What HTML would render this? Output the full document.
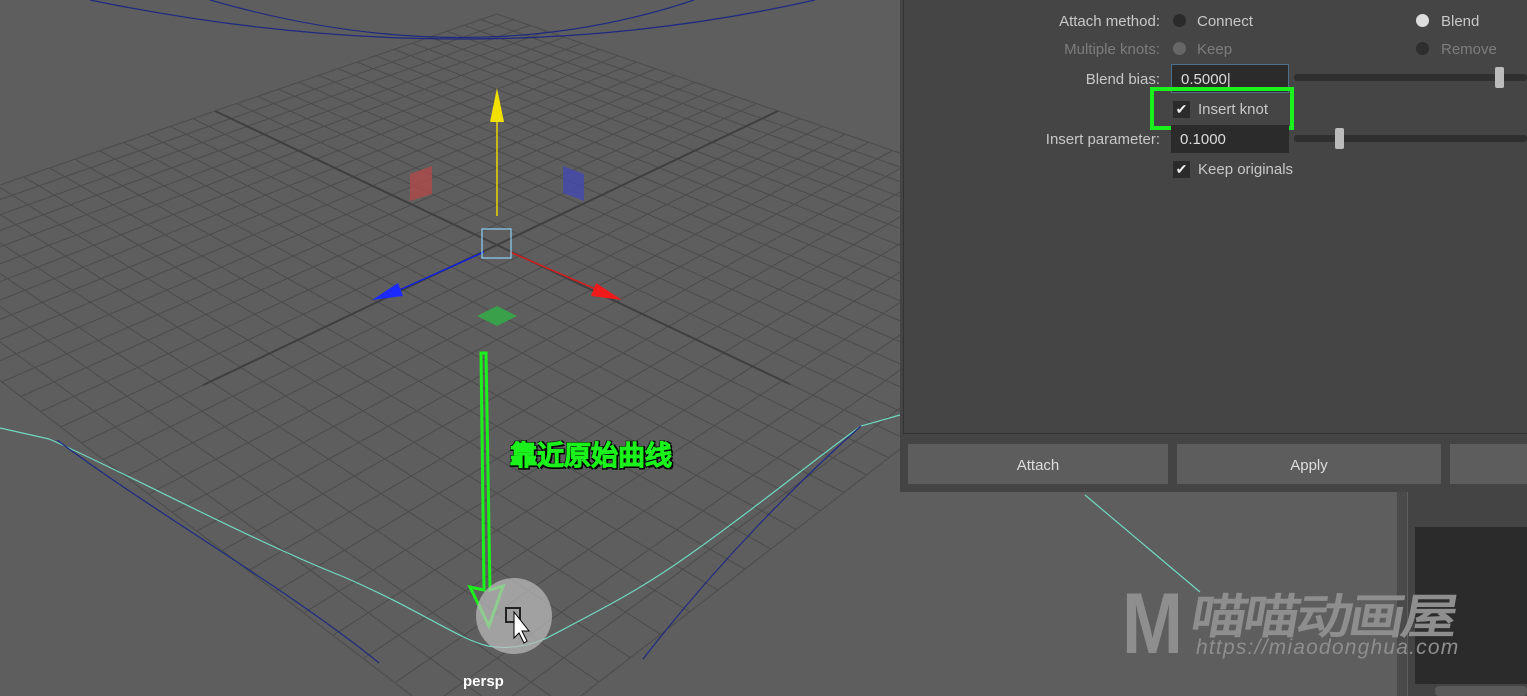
<!DOCTYPE html>
<html><head><meta charset="utf-8"><style>
html,body{margin:0;width:1527px;height:696px;overflow:hidden}
body{background:#5e5e5e;font-family:"Liberation Sans","Noto Sans CJK SC",sans-serif;position:relative}
.p{position:absolute}
.lbl{position:absolute;color:#c8c8c8;font-size:15px;text-align:right;width:260px}
.t{position:absolute;color:#c8c8c8;font-size:15px}
.rad{position:absolute;width:13px;height:13px;border-radius:50%;background:#2a2a2a}
.fld{position:absolute;background:#2b2b2b;color:#ddd;font-size:15px;padding-left:9px;box-sizing:border-box;line-height:28px}
.cb{position:absolute;width:17px;height:17px;background:#2b2b2b;color:#eee;font-size:14px;line-height:17px;text-align:center}
.btn{position:absolute;top:444px;height:40px;background:#5d5d5d;color:#ddd;font-size:15px;text-align:center;line-height:44px}
</style></head><body>
<svg id="vp" class="p" style="left:0;top:0" width="1527" height="696"></svg>
<div class="p" style="left:900px;top:0;width:627px;height:492px;background:#444"></div>
<div class="p" style="left:903px;top:0;width:624px;height:433px;border-left:1px solid #333;border-bottom:1px solid #333;background:#454545"></div>
<div class="lbl" style="left:900px;top:13px">Attach method:</div>
<div class="rad" style="left:1173px;top:14px"></div><div class="t" style="left:1197px;top:13px">Connect</div>
<div class="rad" style="left:1416px;top:14px;background:#ddd"></div><div class="t" style="left:1441px;top:13px">Blend</div>
<div class="lbl" style="left:900px;top:41px;color:#7d7d7d">Multiple knots:</div>
<div class="rad" style="left:1173px;top:42px;background:#666"></div><div class="t" style="left:1197px;top:41px;color:#7d7d7d">Keep</div>
<div class="rad" style="left:1416px;top:42px;background:#2e2e2e"></div><div class="t" style="left:1441px;top:41px;color:#7d7d7d">Remove</div>
<div class="lbl" style="left:900px;top:71px">Blend bias:</div>
<div class="fld" style="left:1171px;top:64px;width:118px;height:29px;border:1px solid #4d6f8a;line-height:29px">0.5000|</div>
<div class="p" style="left:1294px;top:74px;width:233px;height:7px;background:#2f2f2f;border-radius:3px"></div>
<div class="p" style="left:1495px;top:67px;width:9px;height:21px;background:#bbb;border-radius:2px"></div>
<div class="p" style="left:1150px;top:87px;width:136px;height:35px;border:4px solid #1bf21b"></div>
<div class="cb" style="left:1173px;top:101px">✔</div><div class="t" style="left:1198px;top:101px">Insert knot</div>
<div class="lbl" style="left:900px;top:131px">Insert parameter:</div>
<div class="fld" style="left:1171px;top:125px;width:118px;height:28px;line-height:30px">0.1000</div>
<div class="p" style="left:1294px;top:135px;width:233px;height:7px;background:#2f2f2f;border-radius:3px"></div>
<div class="p" style="left:1335px;top:128px;width:9px;height:21px;background:#bbb;border-radius:2px"></div>
<div class="cb" style="left:1173px;top:161px">✔</div><div class="t" style="left:1198px;top:161px">Keep originals</div>
<div class="btn" style="left:908px;width:260px">Attach</div>
<div class="btn" style="left:1177px;width:264px">Apply</div>
<div class="btn" style="left:1450px;width:77px"></div>
<div class="p" style="left:1397px;top:492px;width:10px;height:204px;background:#4a4a4a"></div>
<div class="p" style="left:1408px;top:492px;width:119px;height:204px;background:#444"></div>
<div class="p" style="left:1415px;top:527px;width:112px;height:157px;background:#2b2b2b"></div>
<div class="p" style="left:1435px;top:686px;width:92px;height:10px;background:#5a5a5a;border-radius:4px"></div>
<div class="p" style="left:1122px;top:584px;color:#8e8e8e;font-size:86px;font-weight:bold;line-height:80px;transform:scaleX(0.85);transform-origin:left top">M</div>
<div class="p" style="left:1196px;top:592px;color:#8e8e8e;font-family:'WenQuanYi Zen Hei',sans-serif;font-size:50px;font-weight:bold;line-height:52px;letter-spacing:-3px;transform:skewX(-10deg) scaleX(1.12) scaleY(0.95);transform-origin:left top;white-space:nowrap">喵喵动画屋</div>
<div class="p" style="left:1196px;top:636px;color:#8e8e8e;font-size:21px;font-style:italic;letter-spacing:1.2px;line-height:24px">https://miaodonghua.com</div>
<div class="p" style="left:510px;top:440px;color:#1bf21b;font-family:'WenQuanYi Zen Hei',sans-serif;font-size:27px;font-weight:bold;line-height:32px;-webkit-text-stroke:1px #1bf21b;text-shadow:2px 2px 0 #000,-1px -1px 0 #000,2px -1px 0 #000,-1px 2px 0 #000">靠近原始曲线</div>
<div class="p" style="left:463px;top:673px;color:#fff;font-size:15px;font-weight:bold">persp</div>
<script>
var s=document.getElementById('vp'),h='';
function L(x1,y1,x2,y2,c,w){h+='<line x1="'+x1.toFixed(1)+'" y1="'+y1.toFixed(1)+'" x2="'+x2.toFixed(1)+'" y2="'+y2.toFixed(1)+'" stroke="'+c+'" stroke-width="'+(w||1)+'"/>';}
var q=[[497,14],[778,111],[497,245],[215,111]];
var x0=q[0][0],y0=q[0][1],x1=q[1][0],y1=q[1][1],x2=q[2][0],y2=q[2][1],x3=q[3][0],y3=q[3][1];
var sx=x0-x1+x2-x3,sy=y0-y1+y2-y3,dx1=x1-x2,dx2=x3-x2,dy1=y1-y2,dy2=y3-y2,den=dx1*dy2-dx2*dy1;
var g=(sx*dy2-dx2*sy)/den,hh=(dx1*sy-sx*dy1)/den;
var a=x1-x0+g*x1,b=x3-x0+hh*x3,c=x0,d=y1-y0+g*y1,e=y3-y0+hh*y3,f=y0;
function P(u,v){var w=g*u+hh*v+1;return[(a*u+b*v+c)/w,(d*u+e*v+f)/w];}
var N=30;
for(var i=0;i<=N;i++){var t=2*i/N,col='#4b4b4b',wd=1;
var A=P(t,0),B=P(t,2);L(A[0],A[1],B[0],B[1],col,wd);
A=P(0,t);B=P(2,t);L(A[0],A[1],B[0],B[1],col,wd);}
var A=P(1,0),B=P(1,1.75);L(A[0],A[1],B[0],B[1],'#3f3f3f',2);
A=P(0,1);B=P(1.75,1);L(A[0],A[1],B[0],B[1],'#3f3f3f',2);
h+='<path d="M90,0 Q470,78 815,0" fill="none" stroke="#1f2a80" stroke-width="1.3"/>';
h+='<path d="M210,0 Q470,75 694,0" fill="none" stroke="#1f2a80" stroke-width="1.2"/>';
h+='<path d="M0,428 L49,439 C110,465 250,540 344,577 C420,610 460,640 488,646 C510,650 530,645 545,639 C600,610 640,590 689,555 C760,505 820,455 861,426 L900,415" fill="none" stroke="#6fd8c0" stroke-width="1.2"/>';
h+='<path d="M1085,495 L1200,592" stroke="#6fd8c0" stroke-width="1.2"/>';
h+='<path d="M57,440 C150,510 290,590 379,663" fill="none" stroke="#1f2a80" stroke-width="1.2"/>';
h+='<path d="M643,659 C720,560 800,480 861,426" fill="none" stroke="#1f2a80" stroke-width="1.2"/>';
L(497,216,497,112,'#e8d800',1.5);h+='<path d="M490,122 L497,88 L504,122 Z" fill="#f2e000"/>';
L(484,252,395,292,'#1020e0',1.5);h+='<path d="M372,300 L398,283 L403,296 Z" fill="#1a2aff"/>';
L(510,252,600,291,'#d02020',1.5);h+='<path d="M622,300 L596,283 L591,296 Z" fill="#f01a1a"/>';
h+='<rect x="482" y="229" width="29" height="29" fill="none" stroke="#8ac8e8" stroke-width="1.3"/>';
h+='<path d="M410,174 L432,166 L432,194 L410,201 Z" fill="#b04848" opacity=".8"/>';
h+='<path d="M563,166 L584,174 L584,201 L563,193 Z" fill="#4448b0" opacity=".8"/>';
h+='<path d="M477,316 L497,306 L517,316 L497,326 Z" fill="#3aa04a"/>';
h+='<path d="M481,353 L486,353 L490,590 L503,586 L489,626 L470,587 L484,590 Z" fill="none" stroke="#1bf21b" stroke-width="3"/>';
h+='<circle cx="514" cy="616" r="38" fill="#bdbdbd" opacity=".7"/>';
h+='<rect x="506" y="608" width="14" height="14" fill="none" stroke="#222" stroke-width="2"/>';
h+='<path d="M514,612 L514,638 L519,633 L524,643 L527,641 L522,631 L529,631 Z" fill="#fff" stroke="#000" stroke-width="1"/>';
s.innerHTML=h;
</script>
</body></html>
